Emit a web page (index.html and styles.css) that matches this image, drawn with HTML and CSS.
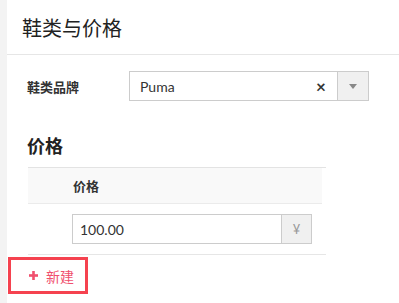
FILE: index.html
```html
<!DOCTYPE html>
<html lang="zh">
<head>
<meta charset="utf-8">
<link rel="stylesheet" href="styles.css">
</head>
<body>
<div class="app">
  <div class="sidebar"></div>
  <div class="main">
    <div class="header">鞋类与价格</div>
    <div class="form-row">
      <label class="label">鞋类品牌</label>
      <div class="select">
        <span class="select-value">Puma</span>
        <span class="select-clear">×</span>
        <span class="select-arrow"><span class="tri"></span></span>
      </div>
    </div>
    <h2 class="section-title">价格</h2>
    <div class="table">
      <div class="thead"><span class="th">价格</span></div>
      <div class="trow">
        <div class="input-group">
          <span class="input-value">100.00</span>
          <span class="addon">¥</span>
        </div>
      </div>
    </div>
    <div class="btn-new">
      <svg class="plus" width="9" height="9" viewBox="0 0 9 9"><rect x="3.2" y="0" width="2.6" height="9" fill="#f0506e"/><rect x="0" y="3.2" width="9" height="2.6" fill="#f0506e"/></svg>
      <span class="btn-text">新建</span>
    </div>
  </div>
</div>
</body>
</html>
```
FILE: styles.css
```css
* { box-sizing: border-box; }
html, body { margin: 0; padding: 0; background: #fff; }
body { font-family: Lato, "Noto Sans CJK SC", sans-serif; color: #333; width: 399px; height: 303px; overflow: hidden; }
.app { display: flex; height: 303px; }
.sidebar { width: 7px; background: #f3f3f3; flex: none; }
.main { flex: 1; }
.header { height: 55px; border-bottom: 1px solid #e6e6e6; display: flex; align-items: center; padding-left: 15px; font-size: 20px; color: #222; }
.form-row { display: flex; align-items: center; margin-top: 16px; padding-left: 20px; }
.label { width: 102px; font-size: 13px; font-weight: 600; color: #333; }
.select { width: 240px; height: 30px; border: 1px solid #ccc; display: flex; align-items: center; }
.select-value { flex: 1; padding-left: 10px; font-size: 14px; color: #333; }
.select-clear { width: 24px; font-size: 17px; font-weight: 700; color: #333; text-align: center; margin-right: 4px; line-height: 1; }
.select-arrow { width: 31px; height: 28px; background: #f0f0f0; border-left: 1px solid #ccc; display: flex; align-items: center; justify-content: center; }
.tri { width: 0; height: 0; border-left: 4.5px solid transparent; border-right: 4.5px solid transparent; border-top: 5px solid #888; }
.section-title { margin: 33px 0 0 20px; font-size: 18px; line-height: 24px; font-weight: 700; color: #222; height: 24px; }
.table { margin: 9px 0 0 21px; width: 298px; border-top: 1px solid #e3e3e3; }
.thead { height: 36px; background: #f9f9f9; border-bottom: 1px solid #ebebeb; width: 294px; display: flex; align-items: center; padding-left: 45px; }
.th { font-size: 13px; font-weight: 600; color: #333; }
.trow { padding: 10px 0 10px 44px; border-bottom: 1px solid #e6e6e6; }
.input-group { width: 240px; height: 30px; border: 1px solid #ccc; display: flex; align-items: center; }
.input-value { flex: 1; padding-left: 7px; font-size: 14px; color: #333; }
.addon { width: 30px; height: 28px; background: #f0f0f0; border-left: 1px solid #ccc; display: flex; align-items: center; justify-content: center; font-size: 13px; color: #999; }
.btn-new { margin: 2px 0 0 1px; width: 80px; height: 37px; border: 3px solid #f5424f; display: flex; align-items: center; padding-left: 18px; }
.plus { margin-right: 8px; }
.btn-text { font-size: 14px; color: #f0506e; }
```
